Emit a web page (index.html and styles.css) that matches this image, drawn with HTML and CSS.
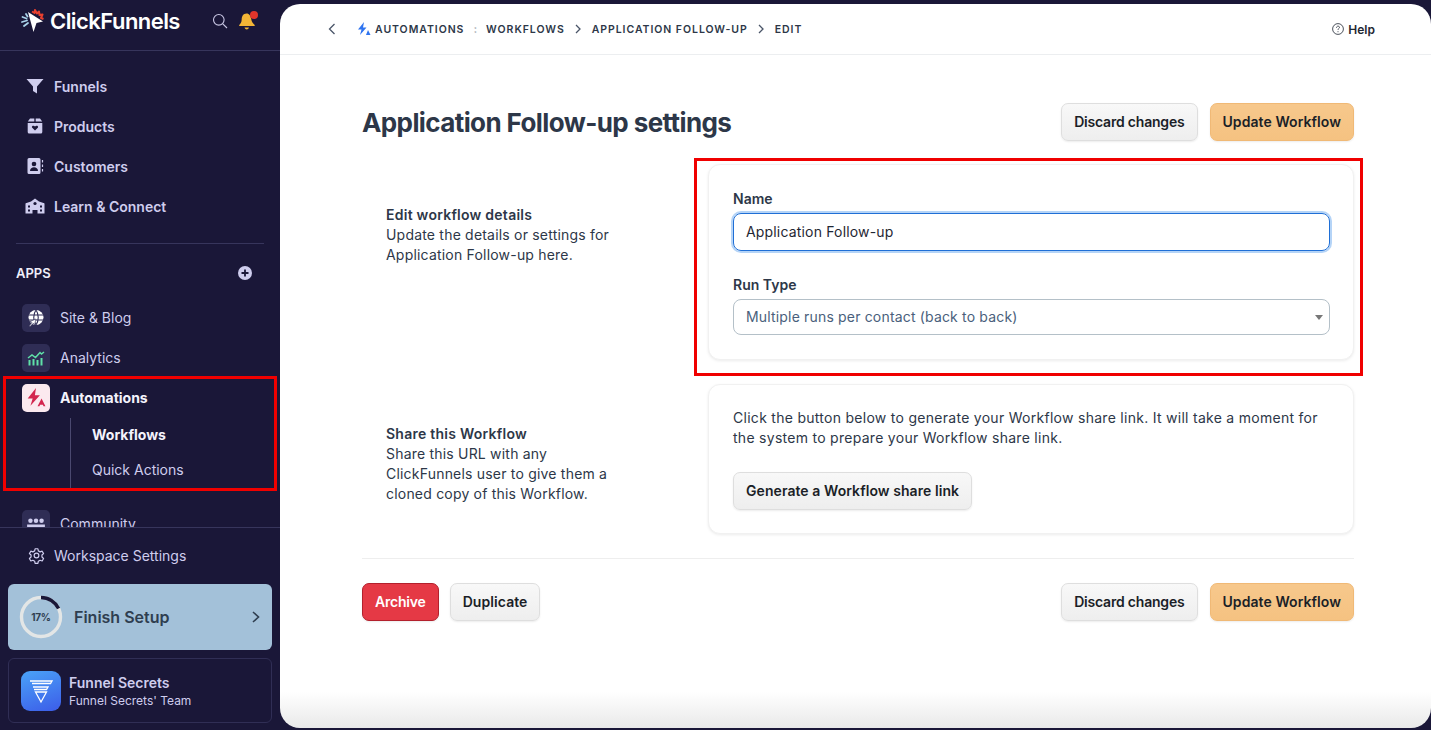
FILE: index.html
```html
<!DOCTYPE html>
<html lang="en">
<head>
  <meta charset="UTF-8" />
  <title>Application Follow-up settings</title>
  <link rel="stylesheet" href="styles.css">
</head>
<body>
  <aside class="sidebar">
    <div class="brand">
      <svg class="brand-logo" viewBox="0 0 24 24" width="24" height="24">
        <path d="M7 3l15 9.500-6.500 1.500L12.500 23z" fill="#fff"/>
        <path d="M11 2.500l2.500 1.500.5-3 2 3.500 2-2 .5 3.500 3-.5-1.500 3.500 2.500 1" fill="none" stroke="#e8402f" stroke-width="2" stroke-linejoin="round"/>
        <path d="M5 5l1.500 2.500M1.500 8l4 1.500M1 13l5-1.500M3 17l4-3" stroke="#a9d3ea" stroke-width="1.800" stroke-linecap="round"/>
      </svg>
      <span class="brand-name">ClickFunnels</span>
      <svg class="brand-search" viewBox="0 0 16 16" width="16" height="16" fill="none" stroke="#c9c7e4" stroke-width="1.100">
        <circle cx="6.800" cy="6.800" r="5.300"/><path d="M10.800 10.800l4.200 4.200"/>
      </svg>
      <span class="bell">
        <svg viewBox="0 0 18 18" width="18" height="18">
          <path d="M8.500 1.500c-3.300 0-4.800 2.800-4.800 5.800 0 3-1.200 4.400-2.500 5.600v1h15.500v-1c-1.800-1.200-3-3-3.500-5.800-.5-3-1.800-5.600-4.700-5.600z" fill="#f3b536"/>
          <path d="M6.500 15.500h4.500c-.4 1.300-1.300 2-2.300 2s-1.800-.7-2.200-2z" fill="#f3b536"/>
        </svg>
        <i class="bell-dot"></i>
      </span>
    </div>

    <div class="side-scroll">
      <nav class="main-nav">
        <a class="nav-item">
          <svg viewBox="0 0 18 18" width="18" height="18"><path d="M.5 2h17l-6.500 7.500v7l-4-2.500V9.500z" fill="#cfcdee"/></svg>
          Funnels
        </a>
        <a class="nav-item">
          <svg viewBox="0 0 18 18" width="18" height="18"><path d="M4 1.500h4.300v3H1.800zM9.700 1.500H14l2.200 3H9.700zM1.700 6h14.600v9a1.500 1.500 0 0 1-1.500 1.500H3.200A1.500 1.500 0 0 1 1.700 15z" fill="#cfcdee"/><path d="M9 13.500L6 10.500c-.7-1.500 1.800-2.300 3-1 1.200-1.300 3.700-.5 3 1z" fill="#1a1738"/></svg>
          Products
        </a>
        <a class="nav-item">
          <svg viewBox="0 0 18 18" width="18" height="18"><path d="M3 1h10a1.500 1.500 0 0 1 1.500 1.500v13A1.500 1.500 0 0 1 13 17H3a1.500 1.500 0 0 1-1.500-1.500v-13A1.500 1.500 0 0 1 3 1z" fill="#cfcdee"/><circle cx="8" cy="7" r="2.300" fill="#1a1738"/><path d="M4 14c0-5 8-5 8 0z" fill="#1a1738"/><path d="M16.500 3v2.500M16.500 7.500V10M16.500 12v2.500" stroke="#cfcdee" stroke-width="1.200"/></svg>
          Customers
        </a>
        <a class="nav-item">
          <svg class="wide" viewBox="0 0 20 16" width="20" height="16"><path d="M1.500 5L6 3.500 10 .5l4 3L18.500 5c.6 0 1 .4 1 1v9.500h-7V12h-5v3.500H.5V6c0-.6.4-1 1-1z" fill="#cfcdee"/><circle cx="10" cy="5.500" r="1.600" fill="#1a1738"/><path d="M3 7.500h2v2H3zM3 11.500h2v2H3zM15 7.500h2v2h-2zM15 11.500h2v2h-2z" fill="#1a1738"/></svg>
          Learn &amp; Connect
        </a>
      </nav>

      <div class="apps-head">
        <span>APPS</span>
        <svg viewBox="0 0 14 14" width="14" height="14"><circle cx="7" cy="7" r="7" fill="#cfcdee"/><path d="M7 3.500v7M3.500 7h7" stroke="#1a1738" stroke-width="1.800"/></svg>
      </div>

      <div class="app-list">
        <a class="app-item">
          <span class="app-icon">
            <svg viewBox="0 0 18 18" width="18" height="18"><circle cx="9" cy="8.500" r="7.500" fill="#fff"/><path d="M1 6h16M1 11h16M9 1c-3 4-3 11 0 15M9 1c3 4 3 11 0 15" fill="none" stroke="#2f2d55" stroke-width="1.100"/><path d="M2 17l3-3.500-2-1 6-2.500-1.500 6-1.200-1.800L3 17.500z" fill="#fff" stroke="#2f2d55" stroke-width=".6"/></svg>
          </span>
          Site &amp; Blog
        </a>
        <a class="app-item">
          <span class="app-icon">
            <svg viewBox="0 0 18 18" width="18" height="18" fill="none" stroke="#5fe0a8"><path d="M1 9l4-3 3.500 2.500L13 3.500l1.500 1.500L17 3" stroke-width="1.500"/><path d="M2.500 11v5.500M6.500 10v6.500M10.500 11v5.500M14.500 9v7.500" stroke-width="2"/></svg>
          </span>
          Analytics
        </a>
        <div class="app-group">
          <a class="app-item current">
            <span class="app-icon pink">
              <svg viewBox="0 0 18 18" width="20" height="20"><path d="M9 0L1.500 9.500h4.500L4 16l8.500-9.500H8z" fill="#d3264f"/><path d="M14 9.500l3.500 7h-1.700l-.6-1.500h-2.500l-.6 1.500h-1.700z" fill="#d3264f"/></svg>
            </span>
            Automations
          </a>
          <div class="sub-list">
            <a class="sub-item current">Workflows</a>
            <a class="sub-item">Quick Actions</a>
          </div>
          <span class="red-box red-box-nav"></span>
        </div>
        <a class="app-item">
          <span class="app-icon">
            <svg viewBox="0 0 18 18" width="20" height="20" fill="#cfcdee"><circle cx="4" cy="6" r="2"/><circle cx="9" cy="6" r="2"/><circle cx="14" cy="6" r="2"/><path d="M1 9.500h6v5H1zM6.500 9.500h5v5h-5zM11 9.500h6v5h-6z"/></svg>
          </span>
          Community
        </a>
      </div>
    </div>

    <div class="side-foot">
      <a class="settings-link">
        <svg viewBox="0 0 24 24" width="17" height="17" fill="none" stroke="#cfcdee" stroke-width="1.700" stroke-linejoin="round"><path d="M10 2.500h4l.6 3 2.500 1.400 2.900-1 2 3.500-2.300 2v2.800l2.300 2-2 3.500-2.900-1-2.500 1.400-.6 3h-4l-.6-3-2.500-1.400-2.900 1-2-3.500 2.300-2v-2.800l-2.300-2 2-3.500 2.900 1 2.500-1.400z"/><circle cx="12" cy="12" r="3.300"/></svg>
        Workspace Settings
      </a>
      <div class="setup-card">
        <span class="ring">
          <svg viewBox="0 0 44 44" width="44" height="44" fill="none" stroke-width="3.400">
            <circle cx="22" cy="22" r="19.500" stroke="#e3e6e6"/>
            <path d="M22 2.500a19.500 19.500 0 0 1 17.600 11.100" stroke="#1a1738"/>
          </svg>
          <b>17%</b>
        </span>
        <span class="setup-label">Finish Setup</span>
        <svg class="setup-arrow" viewBox="0 0 10 14" width="10" height="14" fill="none" stroke="#2f3e50" stroke-width="1.600"><path d="M2 2l5.500 5L2 12"/></svg>
      </div>
      <div class="team-card">
        <span class="team-logo">
          <svg viewBox="0 0 26 26" width="26" height="26" fill="none" stroke="#fff" stroke-width="1.300"><path d="M2 3h22l-1.500 2.500H4M5 9h15l-1.500 2.500H6M7.500 14h11L13 24z"/></svg>
        </span>
        <div class="team-text">
          <div class="team-name">Funnel Secrets</div>
          <div class="team-sub">Funnel Secrets' Team</div>
        </div>
      </div>
    </div>
  </aside>

  <main class="main">
    <header class="topbar">
      <svg class="back" viewBox="0 0 8 12" width="8" height="12" fill="none" stroke="#4a5568" stroke-width="1.300"><path d="M6.500 1L1.500 6l5 5"/></svg>
      <svg class="crumb-icon" viewBox="0 0 14 14" width="14" height="14"><path d="M7 0L1 7.500h3.500L3 13l6.500-7.500H6z" fill="#2f74f0"/><path d="M11 8l2.500 5H9z" fill="#2f74f0"/></svg>
      <span class="crumb">AUTOMATIONS</span>
      <span class="crumb-colon">:</span>
      <span class="crumb">WORKFLOWS</span>
      <svg class="crumb-sep" viewBox="0 0 6 10" width="6" height="10" fill="none" stroke="#4a5568" stroke-width="1.300"><path d="M1 1l4 4-4 4"/></svg>
      <span class="crumb">APPLICATION FOLLOW-UP</span>
      <svg class="crumb-sep" viewBox="0 0 6 10" width="6" height="10" fill="none" stroke="#4a5568" stroke-width="1.300"><path d="M1 1l4 4-4 4"/></svg>
      <span class="crumb">EDIT</span>
      <a class="help">
        <svg viewBox="0 0 12 12" width="12" height="12" fill="none" stroke="#1f2733" stroke-width=".8"><circle cx="6" cy="6" r="5.400"/><path d="M4.500 4.700c0-2 3-2 3-.2 0 1-1.500 1-1.500 2.300M6 8.200v1"/></svg>
        Help
      </a>
    </header>

    <div class="content">
      <div class="page-head">
        <h1>Application Follow-up settings</h1>
        <div class="actions">
          <button class="btn btn-tight">Discard changes</button>
          <button class="btn btn-primary">Update Workflow</button>
        </div>
      </div>

      <section class="row row-details">
        <div class="row-info">
          <h3>Edit workflow details</h3>
          <p>Update the details or settings for Application Follow-up here.</p>
        </div>
        <div class="card">
          <label class="field-label">Name</label>
          <div class="input focused">Application Follow-up</div>
          <label class="field-label second">Run Type</label>
          <div class="input select">
            Multiple runs per contact (back to back)
            <i class="caret"></i>
          </div>
          <span class="red-box red-box-card"></span>
        </div>
      </section>

      <section class="row">
        <div class="row-info">
          <h3>Share this Workflow</h3>
          <p>Share this URL with any ClickFunnels user to give them a cloned copy of this Workflow.</p>
        </div>
        <div class="card">
          <p class="card-text">Click the button below to generate your Workflow share link. It will take a moment for the system to prepare your Workflow share link.</p>
          <button class="btn">Generate a Workflow share link</button>
        </div>
      </section>

      <div class="page-foot">
        <div class="actions actions-left">
          <button class="btn btn-danger btn-tight">Archive</button>
          <button class="btn">Duplicate</button>
        </div>
        <div class="actions">
          <button class="btn btn-tight">Discard changes</button>
          <button class="btn btn-primary">Update Workflow</button>
        </div>
      </div>
    </div>
  </main>
</body>
</html>
```

FILE: styles.css
```css
* {
  box-sizing: border-box;
  margin: 0;
  padding: 0;
}

body {
  font-family: "Inter", "Liberation Sans", sans-serif;
  background: #1a1738;
  color: #2d3748;
  display: flex;
  height: 730px;
  overflow: hidden;
}

/* Sidebar */
.sidebar {
  width: 280px;
  flex-shrink: 0;
  height: 730px;
  display: flex;
  flex-direction: column;
  color: #cfcdee;
}

.brand {
  height: 51px;
  flex-shrink: 0;
  display: flex;
  align-items: center;
  padding: 0 24px 8px 21px;
  border-bottom: 1px solid #37355c;
}

.brand-logo {
  margin-right: 5px;
}

.brand-name {
  font-size: 22px;
  font-weight: 600;
  letter-spacing: -0.55px;
  color: #fff;
}

.brand-search {
  margin-left: auto;
  margin-right: 10px;
}

.bell {
  position: relative;
  display: flex;
}

.bell-dot {
  position: absolute;
  top: -1px;
  right: -2px;
  width: 8px;
  height: 8px;
  border-radius: 50%;
  background: #e0352b;
}

.side-scroll {
  flex: 1;
  overflow: hidden;
}

.main-nav {
  margin: 15px 16px 0;
  padding-bottom: 17px;
  border-bottom: 1px solid #37355c;
}

.nav-item {
  height: 40px;
  display: flex;
  align-items: center;
  gap: 10px;
  padding-left: 10px;
  font-size: 14px;
  font-weight: 600;
}

.nav-item .wide {
  margin: 0 -1px;
}

.apps-head {
  height: 54px;
  padding: 4px 28px 0 16px;
  display: flex;
  align-items: center;
  justify-content: space-between;
  font-size: 13px;
  font-weight: 600;
  color: #f0effa;
}

.app-list {
  padding-left: 22px;
}

.app-item {
  height: 40px;
  padding-bottom: 2px;
  display: flex;
  align-items: center;
  gap: 10px;
  font-size: 14px;
}

.app-item.current {
  font-weight: 700;
  color: #f4f3fc;
}

.app-icon {
  width: 28px;
  height: 28px;
  margin-top: 2px;
  border-radius: 5px;
  background: #2f2d55;
  display: flex;
  align-items: center;
  justify-content: center;
}

.app-icon.pink {
  background: #fbe9ef;
}

.app-group {
  position: relative;
}

.sub-list {
  margin-left: 48px;
  height: 70px;
  border-left: 1px solid #4a486f;
  padding-left: 21px;
  margin-bottom: 16px;
  display: flex;
  flex-direction: column;
}

.sub-item {
  height: 35px;
  padding-bottom: 2px;
  display: flex;
  align-items: center;
  font-size: 14px;
}

.sub-item.current {
  font-weight: 700;
  color: #f4f3fc;
}

.red-box {
  position: absolute;
  border: 3px solid #f00000;
  pointer-events: none;
}

.red-box-nav {
  left: -19px;
  top: -2px;
  width: 274px;
  height: 115px;
}

.side-foot {
  flex-shrink: 0;
  border-top: 1px solid #37355c;
  padding: 0 8px 7px;
}

.settings-link {
  height: 56px;
  display: flex;
  align-items: center;
  gap: 9px;
  padding: 0 0 2px 20px;
  font-size: 14px;
}

.setup-card {
  height: 66px;
  background: #a3c1d9;
  border-radius: 6px;
  display: flex;
  align-items: center;
  padding: 0 11px;
  color: #2f3e50;
}

.ring {
  position: relative;
  width: 44px;
  height: 44px;
  display: flex;
  align-items: center;
  justify-content: center;
}

.ring svg {
  position: absolute;
  inset: 0;
}

.ring b {
  font-size: 10px;
  font-weight: 700;
  letter-spacing: -0.3px;
}

.setup-label {
  font-size: 16px;
  font-weight: 600;
  margin: 0 0 1px 11px;
}

.setup-arrow {
  margin-left: auto;
}

.team-card {
  height: 65px;
  margin-top: 8px;
  border: 1px solid #302e55;
  border-radius: 6px;
  display: flex;
  align-items: center;
  padding-left: 12px;
  gap: 8px;
}

.team-logo {
  width: 40px;
  height: 40px;
  border-radius: 9px;
  background: linear-gradient(160deg, #4aa3f8, #3c5ce8);
  display: flex;
  align-items: center;
  justify-content: center;
}

.team-text {
  padding-top: 2px;
}

.team-name {
  font-size: 14px;
  font-weight: 600;
  line-height: 18px;
}

.team-sub {
  font-size: 12px;
  line-height: 18px;
}

/* Main panel */
.main {
  flex: 1;
  height: 724px;
  margin-top: 4px;
  background: linear-gradient(to bottom, #fff 95%, #e9e9e9);
  border-radius: 20px;
  display: flex;
  flex-direction: column;
}

.topbar {
  height: 51px;
  flex-shrink: 0;
  display: flex;
  align-items: center;
  padding: 0 56px 0 48px;
  border-bottom: 1px solid #eceef0;
}

.back {
  margin-right: 21px;
}

.crumb-icon {
  margin-right: 4px;
}

.crumb {
  font-size: 10.5px;
  font-weight: 600;
  letter-spacing: 0.95px;
  color: #2d3748;
}

.crumb-colon {
  margin: 0 9px;
  font-size: 11px;
  font-weight: 700;
  color: #aab0b8;
}

.crumb-sep {
  margin: 0 11px 0 10px;
}

.help {
  margin-left: auto;
  display: flex;
  align-items: center;
  gap: 4px;
  font-size: 12px;
  font-weight: 600;
  color: #1f2733;
}

.content {
  padding: 0 77px 0 82px;
}

.page-head {
  height: 109px;
  display: flex;
  align-items: center;
  justify-content: space-between;
  padding-top: 25px;
}

h1 {
  font-size: 26px;
  font-weight: 700;
  letter-spacing: -0.6px;
}

.actions {
  display: flex;
  gap: 12px;
}

.actions-left {
  gap: 11px;
}

.btn {
  height: 38px;
  padding: 0 12px 2px;
  font-family: inherit;
  font-size: 14px;
  font-weight: 600;
  letter-spacing: 0.07px;
  color: #1b1f27;
  border: 1px solid #dedede;
  border-radius: 7px;
  background: linear-gradient(to bottom, #f8f8f8, #eeeeee);
  box-shadow: 0 1px 2px rgba(0, 0, 0, 0.08);
}

.btn-tight {
  letter-spacing: -0.2px;
}

.btn-primary {
  background: linear-gradient(to bottom, #f7c88c, #f5c281);
  border-color: #f0b976;
}

.btn-danger {
  background: #e53945;
  border-color: #b3202c;
  color: #fff;
}

.row {
  display: grid;
  grid-template-columns: 346px 646px;
  margin-bottom: 24px;
}

.row-info {
  padding: 40px 90px 0 24px;
  font-size: 14px;
  line-height: 20px;
  letter-spacing: 0.2px;
}

.row-details .row-info {
  padding-top: 41px;
}

.row-info h3 {
  font-size: 14px;
  font-weight: 600;
  letter-spacing: 0.25px;
}

.card {
  position: relative;
  border: 1px solid #f1f1f1;
  border-radius: 12px;
  background: #fff;
  padding: 23px 23px 23px 24px;
  box-shadow: 0 1px 3px rgba(0, 0, 0, 0.08);
}

.row-details .card {
  height: 196px;
}

.field-label {
  display: block;
  font-size: 14px;
  font-weight: 600;
  line-height: 22px;
  margin-bottom: 3px;
}

.field-label.second {
  margin-top: 23px;
}

.input {
  position: relative;
  width: 597px;
  height: 38px;
  display: flex;
  align-items: center;
  padding: 0 12px 2px;
  font-size: 14px;
  letter-spacing: 0.17px;
  border-radius: 8px;
}

.input.focused {
  border: 1px solid #1f6fd6;
  box-shadow: 0 0 0 2px #b5d4f7;
  color: #1f2733;
}

.input.select {
  height: 36px;
  border: 1px solid #b4c0c8;
  color: #4a5f7c;
}

.caret {
  position: absolute;
  right: 6px;
  top: 15px;
  border-left: 4px solid transparent;
  border-right: 4px solid transparent;
  border-top: 5px solid #777;
}

.red-box-card {
  left: -15px;
  top: -7px;
  width: 669px;
  height: 218px;
}

.card-text {
  font-size: 14px;
  line-height: 20px;
  letter-spacing: 0.28px;
  margin-bottom: 24px;
}

.page-foot {
  display: flex;
  justify-content: space-between;
  border-top: 1px solid #eeeeee;
  padding-top: 24px;
}
```
